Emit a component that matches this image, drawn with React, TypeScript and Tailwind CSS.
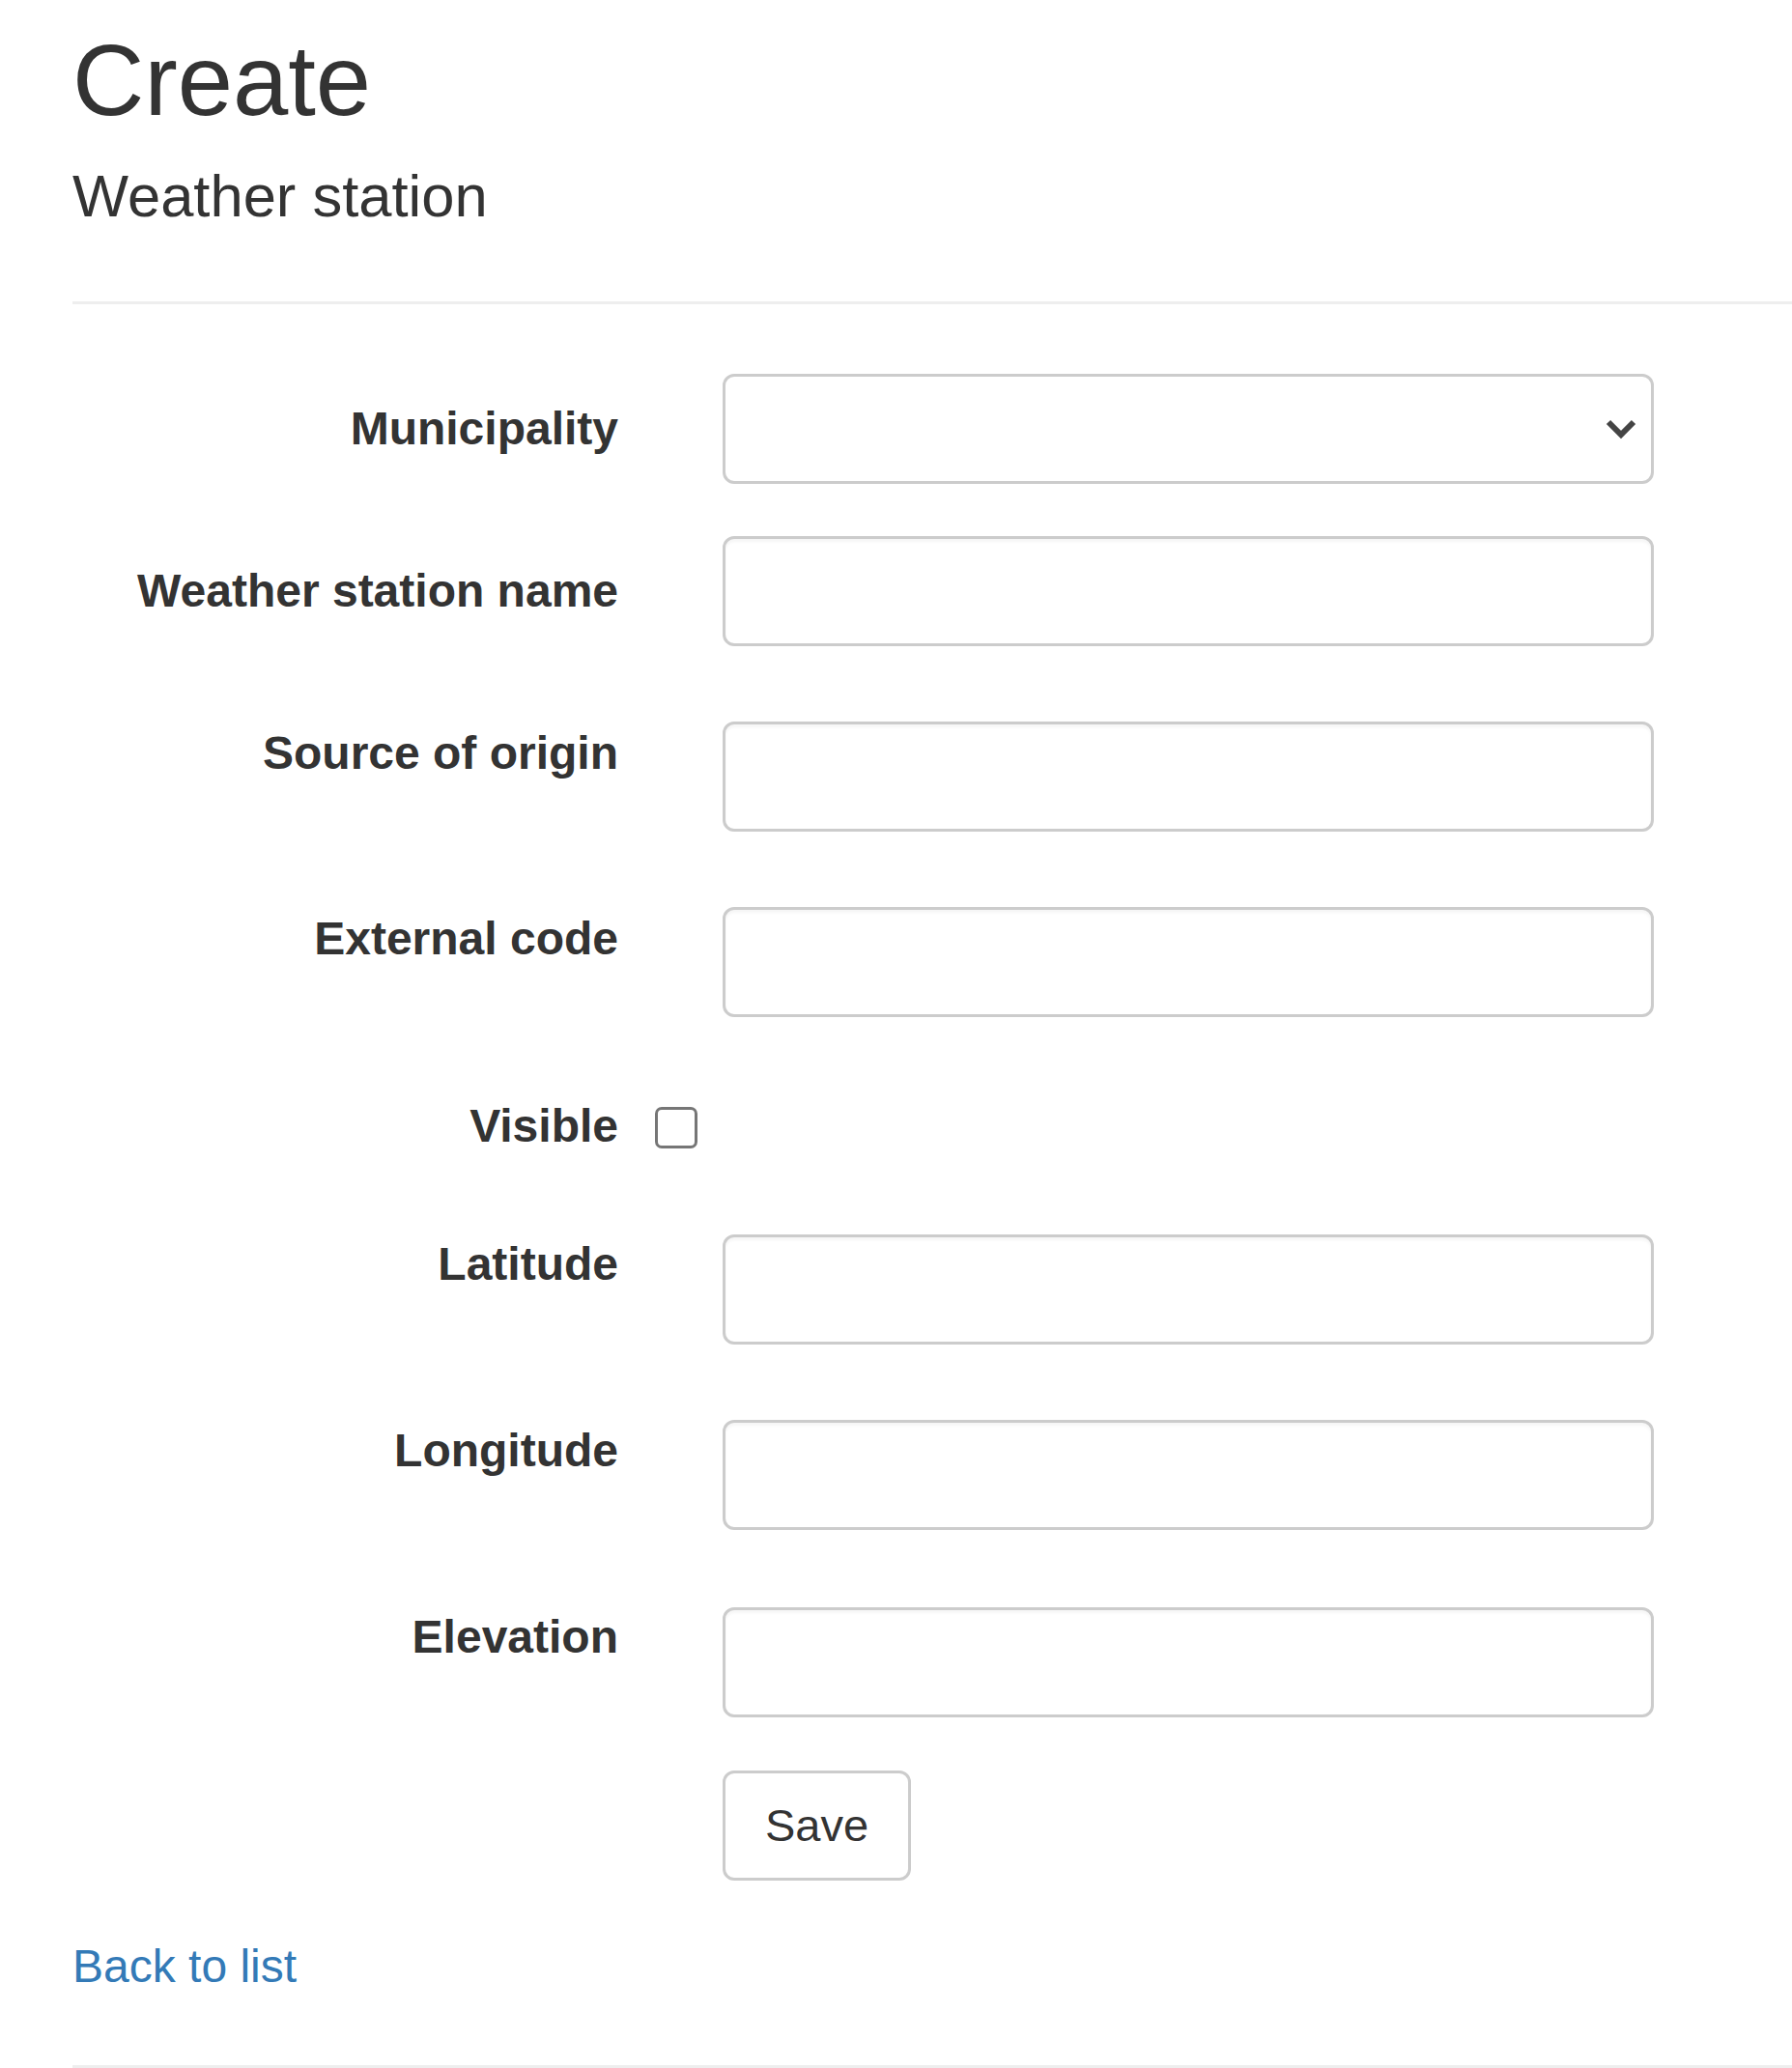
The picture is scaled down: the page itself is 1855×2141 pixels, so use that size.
import React from "react";

function Label({ text, cls }: { text: string; cls: string }) {
  return (
    <div className={"w-[565px] shrink-0 text-right text-[48px] leading-[58px] font-bold text-[#333] " + cls}>
      {text}
    </div>
  );
}

function TextInput() {
  return (
    <div className="h-[114px] w-[964px] rounded-[12px] border-[3px] border-[#ccc] bg-white shadow-[inset_0_3px_3px_rgba(0,0,0,0.04)]" />
  );
}

export default function App() {
  return (
    <div className="min-h-[2141px] bg-white pl-[75px] text-[#333] [font-family:'Liberation_Sans',Arial,sans-serif]">
      <h2 className="pt-[28px] text-[103px] leading-[112px] font-normal">Create</h2>
      <h4 className="mt-[30px] text-[61.5px] leading-[66px] font-normal">Weather station</h4>
      <div className="mt-[76px] h-[3px] bg-[#eee]" />

      <div className="mt-[72px] flex items-start gap-[108px]">
        <Label text="Municipality" cls="pt-[28px]" />
        <div className="relative flex h-[114px] w-[964px] items-center justify-end rounded-[12px] border-[3px] border-[#ccc] bg-white pr-[14px]">
          <svg width="34" height="22" viewBox="0 0 34 22">
            <polyline points="4,4 17,17 30,4" fill="none" stroke="#444" strokeWidth="6" strokeLinejoin="miter" />
          </svg>
        </div>
      </div>

      <div className="mt-[54px] flex items-start gap-[108px]">
        <Label text="Weather station name" cls="pt-[28px]" />
        <TextInput />
      </div>

      <div className="mt-[78px] flex items-start gap-[108px]">
        <Label text="Source of origin" cls="pt-[4px]" />
        <TextInput />
      </div>

      <div className="mt-[78px] flex items-start gap-[108px]">
        <Label text="External code" cls="pt-[4px]" />
        <TextInput />
      </div>

      <div className="mt-[84px] flex items-start">
        <Label text="Visible" cls="pt-0" />
        <div className="ml-[38px] mt-[9px] h-[43px] w-[44px] rounded-[7px] border-[3px] border-[#767676] bg-white" />
      </div>

      <div className="mt-[83px] flex items-start gap-[108px]">
        <Label text="Latitude" cls="pt-[2px]" />
        <TextInput />
      </div>

      <div className="mt-[78px] flex items-start gap-[108px]">
        <Label text="Longitude" cls="pt-[3px]" />
        <TextInput />
      </div>

      <div className="mt-[80px] flex items-start gap-[108px]">
        <Label text="Elevation" cls="pt-[2px]" />
        <TextInput />
      </div>

      <div className="mt-[55px] pl-[673px]">
        <button className="flex h-[114px] w-[195px] items-center justify-center rounded-[12px] border-[3px] border-[#ccc] bg-white text-[47px] text-[#333]">
          Save
        </button>
      </div>

      <div className="mt-[61px] text-[48px] leading-[56px]">
        <a href="#" className="text-[#337ab7]">Back to list</a>
      </div>

      <div className="mt-[74px] h-[3px] bg-[#eee]" />
    </div>
  );
}
